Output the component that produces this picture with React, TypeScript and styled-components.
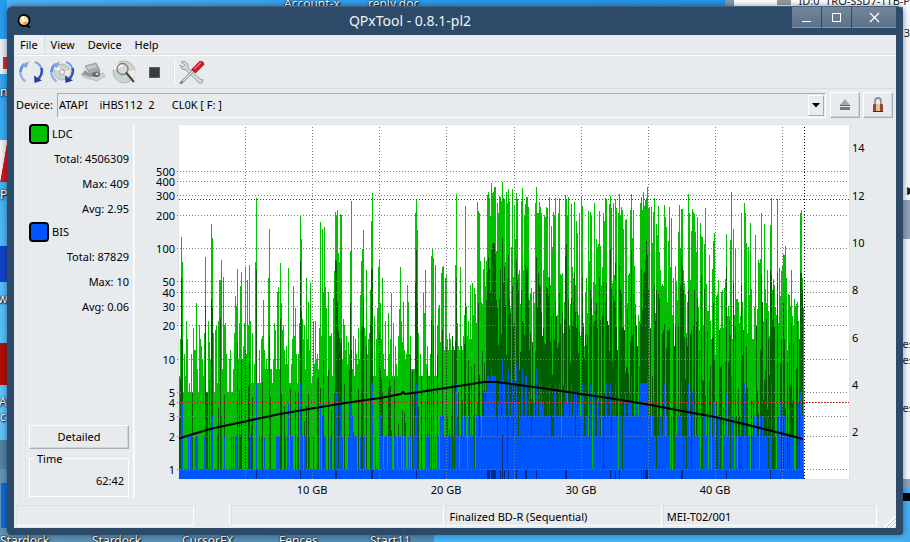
import React from "react";
import styled, { createGlobalStyle } from "styled-components";

const GlobalStyle = createGlobalStyle`
  * { box-sizing: border-box; }
  html, body { margin: 0; height: 100%; overflow: hidden; }
  body {
    font-family: "Noto Sans", "Open Sans", sans-serif;
    font-size: 11px;
    line-height: 16px;
    color: #000;
  }
  button, select { font: inherit; color: inherit; }
`;

/* ---------- desktop behind the window ---------- */

const Desktop = styled.div`
  position: relative;
  display: flex;
  height: 100vh;
  padding: 6px 7px 7px;
  overflow: hidden;
  background: linear-gradient(90deg, #4fb4f4 0%, #2a9aea 50%, #2491e6 100%);
`;

const Backdrop = styled.div`
  position: absolute;
  inset: 0;
  overflow: hidden;
`;

type PatchProps = {
  $left?: number;
  $right?: number;
  $top?: number;
  $bottom?: number;
  $w: number;
  $h: number;
  $bg: string;
};
const px = (n?: number) => (n === undefined ? "auto" : `${n}px`);

const Patch = styled.div<PatchProps>`
  position: absolute;
  left: ${(p) => px(p.$left)};
  right: ${(p) => px(p.$right)};
  top: ${(p) => px(p.$top)};
  bottom: ${(p) => px(p.$bottom)};
  width: ${(p) => p.$w}px;
  height: ${(p) => p.$h}px;
  background: ${(p) => p.$bg};
`;

const IconCaption = styled.span<{ $left?: number; $right?: number; $top?: number; $bottom?: number; $dark?: boolean }>`
  position: absolute;
  left: ${(p) => px(p.$left)};
  right: ${(p) => px(p.$right)};
  top: ${(p) => px(p.$top)};
  bottom: ${(p) => px(p.$bottom)};
  font-size: ${(p) => (p.$dark ? 11 : 12)}px;
  white-space: nowrap;
  color: ${(p) => (p.$dark ? "#1c1c28" : "#fff")};
  text-shadow: ${(p) => (p.$dark ? "none" : "1px 1px 2px #000, 0 0 2px #000")};
`;

/* ---------- window frame ---------- */

const Frame = styled.main`
  position: relative;
  flex: 1;
  min-width: 0;
  display: flex;
  flex-direction: column;
  padding: 0 7px 7px;
  background: #2d4a68;
  border-top: 1px solid #47617c;
  border-radius: 6px 6px 4px 4px;
  box-shadow: 0 0 6px rgba(0, 20, 50, 0.5);
`;

const TitleBar = styled.header`
  display: grid;
  grid-template-columns: 104px 1fr 104px;
  flex: none;
  height: 28px;
  color: #eef2f6;
`;

const AppIcon = styled.svg`
  width: 14px;
  height: 16px;
  margin: 6px 0 0 3px;
`;

const Title = styled.h1`
  margin: 0;
  font-size: 14px;
  font-weight: 400;
  line-height: 28px;
  text-align: center;
  padding-right: 90px;
`;

const WindowButtons = styled.div`
  display: grid;
  grid-template-columns: 29px 29px 44px;
  gap: 1px;
  height: 21px;
`;

const WindowButton = styled.button`
  display: grid;
  place-items: center;
  padding: 0;
  border: 0;
  border-bottom: 1px solid #8495a8;
  background: linear-gradient(#73869b, #5c728a);
  &:hover { background: #8496aa; }
`;

const Client = styled.div`
  flex: 1;
  min-height: 0;
  display: flex;
  flex-direction: column;
  background: #e7ebee;
`;

/* ---------- menu and toolbar ---------- */

const MenuBar = styled.nav`
  display: flex;
  flex: none;
  height: 20px;
  border-bottom: 1px solid #dde1e4;
`;

const MenuButton = styled.button<{ $active?: boolean }>`
  height: 19px;
  padding: 0 6px;
  border: 0;
  border-right: 1px solid ${(p) => (p.$active ? "#d8dce0" : "transparent")};
  background: ${(p) => (p.$active ? "#eceff1" : "none")};
  line-height: 19px;
`;

const ToolBar = styled.div`
  display: flex;
  flex: none;
  align-items: center;
  height: 34px;
  padding-left: 1px;
  border-top: 1px solid #fff;
  border-bottom: 1px solid #d9dde0;
`;

const ToolButton = styled.button`
  display: grid;
  place-items: center;
  width: 31px;
  height: 30px;
  padding: 0;
  border: 0;
  background: none;
`;

const ToolSeparator = styled.span`
  width: 2px;
  height: 26px;
  margin: 0 1px 0 3px;
  border-left: 1px solid #dde1e4;
  border-right: 1px solid #fff;
`;

const DeviceRow = styled.div`
  display: flex;
  flex: none;
  align-items: center;
  height: 32px;
  padding: 0 3px 0 2px;
`;

const DeviceLabel = styled.label`
  width: 41px;
  white-space: nowrap;
`;

const SelectBox = styled.div`
  flex: 1;
  display: grid;
  grid-template-columns: 1fr 19px;
  height: 25px;
`;

const DeviceSelect = styled.select`
  grid-area: 1 / 1 / 2 / 3;
  min-width: 0;
  height: 25px;
  padding: 0 20px 0 1px;
  appearance: none;
  border: 1px solid;
  border-color: #a5adb1 #fff #fff #a5adb1;
  border-radius: 0;
  background: #e7ebee;
`;

const SelectArrow = styled.span`
  grid-area: 1 / 2 / 2 / 3;
  z-index: 1;
  display: grid;
  place-items: center;
  width: 16px;
  height: 21px;
  margin: 2px 0 0 1px;
  border: 1px solid;
  border-color: #fff #a5adb1 #a5adb1 #fff;
  pointer-events: none;
`;

const RaisedButton = styled.button`
  border: 1px solid;
  border-color: #fff #a5b0b5 #a5b0b5 #fff;
  box-shadow: inset -1px -1px 0 #cdd3d6;
  background: #e7ebee;
  padding: 0;
`;

const SquareButton = styled(RaisedButton)`
  display: grid;
  place-items: center;
  flex: none;
  width: 30px;
  height: 26px;
  margin-left: 3px;
  &:first-of-type { margin-left: 4px; }
`;

/* ---------- body ---------- */

const Body = styled.div`
  flex: 1;
  min-height: 0;
  display: flex;
  padding: 0 6px 3px;
`;

const Gutter = styled.div`
  width: 6px;
  margin: 3px 3px 0 0;
  border: 1px solid #dfe3e6;
`;

const Sidebar = styled.aside`
  display: flex;
  flex-direction: column;
  width: 100px;
  padding: 3px 0 5px;
`;

const SidebarDivider = styled.div`
  width: 2px;
  margin: 4px 5px 4px 4px;
  border-left: 1px solid #fff;
  border-right: 1px solid #f3f5f6;
`;

const Series = styled.section`
  display: grid;
  grid-template-rows: 20px;
  grid-auto-rows: 17px;
  row-gap: 8px;
  margin-bottom: 3px;
`;

const SeriesHead = styled.h2`
  display: flex;
  align-items: center;
  gap: 3px;
  margin: 0;
  font-size: 11px;
  font-weight: 400;
  line-height: 20px;
`;

const Swatch = styled.button<{ $color: string }>`
  width: 20px;
  height: 20px;
  padding: 0;
  border: 2px solid #000;
  border-radius: 4px;
  background: ${(p) => p.$color};
`;

const Stat = styled.p`
  margin: 0;
  text-align: right;
  line-height: 14px;
`;

const DetailedButton = styled(RaisedButton)`
  height: 24px;
  margin-top: auto;
`;

const TimeBox = styled.fieldset`
  display: flex;
  justify-content: flex-end;
  height: 45px;
  margin: 3px 0 0;
  padding: 8px 4px 0;
  border: 1px solid #fff;
  outline: 1px solid transparent;
  legend { padding: 0 3px; line-height: 13px; }
`;

const ChartSvg = styled.svg`
  flex: 1;
  min-width: 0;
  min-height: 0;
  display: block;
  font-size: 11px;
`;

/* ---------- status bar ---------- */

const StatusBar = styled.footer`
  display: grid;
  grid-template-columns: 179fr 36fr 214fr 217fr 215fr 18px;
  flex: none;
  height: 23px;
  padding-left: 2px;
`;

const StatusCell = styled.div<{ $plain?: boolean }>`
  height: 21px;
  margin-right: 1px;
  padding-left: 3px;
  border: 1px solid;
  border-color: ${(p) => (p.$plain ? "transparent #fff transparent transparent" : "#dde1e4 #fff #fff #dde1e4")};
  line-height: 21px;
  white-space: nowrap;
`;

const Grip = styled.svg`
  align-self: end;
  justify-self: end;
`;

/* ---------- chart data ---------- */

const FIRST = 179;
const LAST = 803;
const FLOOR = 479;
const yOf = (n: number) => Math.round(469 - 110.5 * Math.log10(n));

const parse = (text: string) => {
  const map = new Map<number, number>();
  text.trim().split(/\s+/).forEach((pair) => {
    const [x, y] = pair.split(":").map(Number);
    map.set(x, y);
  });
  return map;
};

const ldcMax = parse(`
181:237 182:262 196:303 205:257 211:224 212:238 219:280 220:280 221:260 223:277 235:296 236:306 237:269 240:286 241:272
245:267 247:280 249:265 255:262 256:198 263:300 268:278 269:229 277:292 278:287 280:263 281:303 288:268 293:286 295:308
300:215 301:239 306:278 308:302 310:283 320:222 322:229 323:292 324:227 325:287 326:308 328:292 333:298 334:271 335:212
336:215 337:210 338:253 339:262 340:214 341:215 350:251 351:201 360:295 361:261 362:249 363:230 366:270 370:290 371:221
372:193 377:308 378:267 379:259 380:303 382:278 391:293 400:267 403:302 407:285 408:302 415:213 416:199 417:230 423:293
425:270 431:256 432:249 433:258 435:265 438:308 439:305 441:273 442:267 443:266 445:278 446:274 455:265 456:194 460:267
465:206 466:306 470:285 472:283 474:288 475:294 477:202 478:211 479:213 480:261 481:302 483:269 484:257 485:286 486:261
487:195 488:192 489:198 490:216 491:183 492:193 493:192 494:187 495:187 496:251 497:203 498:213 499:196 500:197 501:201
502:182 503:198 504:199 505:262 506:192 507:203 508:189 509:201 510:308 511:247 512:189 513:277 514:205 515:239 516:193
517:199 518:274 519:270 521:201 522:188 523:270 524:215 525:204 526:197 527:197 528:207 529:300 530:293 531:288 533:292
535:203 536:187 537:213 538:213 539:202 540:207 541:213 543:270 544:215 545:217 546:207 547:208 548:277 549:197 550:285
551:226 552:247 553:212 554:215 555:198 558:213 559:198 560:274 561:275 562:273 564:302 565:195 566:199 567:215 568:197
571:204 572:267 573:278 574:202 575:285 576:221 577:233 579:213 581:196 582:206 585:292 586:278 588:211 589:261 590:212
591:215 593:282 594:203 595:284 596:239 597:247 598:244 599:211 600:246 601:285 602:267 603:213 604:221 605:198 606:199
609:204 610:196 611:208 612:283 613:203 614:275 615:199 616:208 618:213 619:194 620:215 621:207 622:210 623:229 625:220
626:219 627:303 628:275 629:273 630:210 631:194 632:238 633:210 634:266 640:203 641:197 642:210 643:192 644:206 645:200
646:198 647:187 648:208 649:207 651:207 652:243 653:212 654:198 656:224 657:235 658:206 659:252 660:270 661:286 662:284
663:286 664:205 665:217 666:227 667:302 668:241 669:207 670:267 671:218 673:278 675:266 676:281 677:300 678:232 679:205
680:248 681:209 682:209 683:270 684:283 685:294 687:302 688:194 689:213 690:280 691:231 692:209 693:212 694:214 695:232
696:252 697:217 700:223 701:236 702:237 704:244 705:208 706:284 709:255 712:269 713:241 714:233 716:296 717:294 718:280
721:292 722:290 724:288 725:279 726:234 730:240 731:192 733:229 735:249 736:299 737:299 738:302 741:213 742:302 744:203
745:213 746:243 748:247 749:295 750:223 751:289 755:235 758:260 759:263 760:259 761:213 764:224 765:289 767:270 770:225
771:198 772:290 773:279 774:285 777:199 779:268 780:296 781:271 782:265 783:254 784:255 785:246 786:278 788:294 789:295
791:270 794:299 797:302 800:213 801:210 802:278 803:308`);

const ldcAvg = parse(`
181:278 182:340 205:306 211:299 212:308 220:318 237:343 241:360 245:350 249:352 256:270 269:336 280:319 300:261 301:311
323:360 335:260 336:261 337:302 338:331 339:338 340:343 341:339 350:303 351:350 361:330 362:326 363:298 366:346 370:325
371:270 372:268 379:332 415:283 416:250 417:303 431:320 433:325 442:330 456:278 465:303 478:303 486:300 487:272 488:257
489:269 490:292 491:250 492:244 493:243 494:243 495:254 496:300 497:308 499:299 500:269 502:237 503:283 504:267 505:305
507:279 508:255 509:299 512:286 516:260 517:280 518:291 521:290 525:265 526:269 527:267 528:299 536:257 537:308 538:273
539:285 540:287 546:287 547:288 548:296 549:278 555:302 559:293 565:256 566:244 568:299 571:298 573:302 574:273 582:278
590:290 591:299 596:303 599:278 603:282 605:303 606:283 610:249 611:289 613:296 614:301 615:263 619:265 620:290 621:294
631:250 633:294 641:269 643:273 644:272 645:260 646:241 647:255 648:290 654:285 656:290 658:294 659:299 680:285 681:256
682:267 683:290 688:290 694:290 697:299 701:275 704:289 713:303 726:267 733:283 741:285 761:275 762:302 770:270 771:275
773:290 777:273 783:303 800:273 801:273 802:290`);

const bisMax = parse(`
181:402 182:402 205:416 211:416 212:416 221:416 256:383 269:416 288:402 300:383 320:402 322:416 335:392 336:392 337:392
340:402 341:402 350:402 351:392 363:402 371:383 372:383 379:416 415:416 416:383 433:416 442:416 455:392 456:383 477:402
486:392 487:376 488:376 489:383 490:379 491:369 492:376 493:376 494:376 495:376 499:383 500:379 502:359 503:379 504:383
508:369 512:379 516:364 521:383 522:369 525:376 526:376 536:369 539:383 541:383 549:383 555:383 559:383 565:383 566:392
571:383 574:392 582:383 590:383 594:392 605:383 606:383 610:383 615:383 619:383 631:376 640:383 641:383 642:383 643:383
644:383 645:383 646:383 647:376 664:383 681:383 688:383 692:392 726:392 731:376 744:383 745:392 771:383 782:416 784:416
785:416 800:392 801:392 802:416`);

const bisAvg = [256, 300, 335, 336, 371, 372, 416, 487, 488, 489, 491, 492, 493, 494, 495, 500, 504, 508, 516, 525, 526,
  536, 565, 566, 610, 615, 619, 641, 643, 645, 646, 647, 681, 682, 726, 770];

const randomFrom = (seed: number) => () => {
  seed = (seed * 1664525 + 1013904223) % 4294967296;
  return seed / 4294967296;
};

function buildBars() {
  const rnd = randomFrom(8112);
  let light = "";
  let dark = "";
  let blue = "";
  for (let x = FIRST; x <= LAST; x++) {
    const r = rnd();
    let n: number;
    if (x < 372) n = Math.floor(5 + (x > 240 ? 1 : 0) + r ** 2 * 18);
    else if (x < 440) n = Math.floor(7 + r ** 3 * 22);
    else if (x < 480) n = Math.floor(12 + r ** 2 * 16);
    else if (x < 700) n = Math.floor(12 + r * 22);
    else n = Math.floor(9 + r * 24);
    const top = ldcMax.get(x) ?? yOf(n);
    light += `M${x} ${top}h1V${FLOOR}h-1z`;

    const d = rnd();
    const h = rnd();
    let m = 0;
    if (x < 320) m = d < 0.14 ? 2 + h * 5 : 0;
    else if (x < 390) m = d < 0.3 ? 2 + h * 6 : 0;
    else if (x < 450) m = d < 0.4 ? 2 + h ** 2 * 12 : 0;
    else if (x < 483) m = d < 0.55 ? 3 + h ** 2 * 16 : 0;
    else if (x < 650) m = d < 0.8 ? 4 + h * 24 : 0;
    else if (x < 700) m = d < 0.65 ? 4 + h * 18 : 0;
    else m = d < 0.6 ? 3 + h ** 2 * 20 : 0;
    const darkTop = ldcAvg.get(x) ?? (m ? Math.max(yOf(m), top) : FLOOR);
    if (darkTop < FLOOR) dark += `M${x} ${darkTop}h1V${FLOOR}h-1z`;

    const b = rnd();
    let level = 1;
    if (x < 245) level = b < 0.12 ? 2 : 1;
    else if (x < 340) level = b < 0.32 ? 2 : 1;
    else if (x < 440) level = b < 0.04 ? 3 : b < 0.5 ? 2 : 1;
    else if (x < 483) level = b < 0.3 ? 3 : b < 0.85 ? 2 : 1;
    else if (x < 650) level = b < 0.08 ? 5 : b < 0.4 ? 4 : b < 0.82 ? 3 : b < 0.97 ? 2 : 1;
    else if (x < 700) level = b < 0.16 ? 4 : b < 0.45 ? 3 : b < 0.83 ? 2 : 1;
    else level = b < 0.06 ? 4 : b < 0.24 ? 3 : b < 0.66 ? 2 : 1;
    const blueTop = bisMax.get(x) ?? yOf(level);
    blue += `M${x} ${blueTop}h1V${FLOOR}h-1z`;
  }
  const navy = bisAvg.map((x) => `M${x} 470h1V${FLOOR}h-1z`).join("") + `M502 435h1V${FLOOR}h-1z`;
  return { light, dark, blue, navy };
}

const bars = buildBars();

const leftTicks = [500, 400, 300, 200, 100, 50, 40, 30, 20, 10, 5, 4, 3, 2, 1];
const rightTicks: [number, number][] = [[14, 148], [12, 196], [10, 243], [8, 290], [6, 338], [4, 385], [2, 432]];
const minorX = [245, 312, 379, 446, 514, 581, 648, 715, 782];
const majorX: [string, number][] = [["10 GB", 312], ["20 GB", 446], ["30 GB", 581], ["40 GB", 715]];

function Chart() {
  return (
    <ChartSvg viewBox="140 121 750 381" role="img" aria-label="LDC and BIS error rates over disc capacity">
      <rect x="178" y="124" width="672" height="356" fill="#dfe3e6" />
      <rect x="179" y="125" width="670" height="354" fill="#fff" />
      <g shapeRendering="crispEdges">
        <path d={bars.light} fill="#00c000" />
        <path d={bars.dark} fill="#006000" />
        <path d={bars.blue} fill="#0055ff" />
        <path d={bars.navy} fill="#002a80" />
        <g stroke="#808080" strokeDasharray="1 2">
          {leftTicks.map((t) => (
            <line key={t} x1="177" x2="849" y1={yOf(t) + 0.5} y2={yOf(t) + 0.5} />
          ))}
          {minorX.map((x) => (
            <line key={x} x1={x + 0.5} x2={x + 0.5} y1="127" y2="479" />
          ))}
        </g>
        <path d="M179 199.500H849M179 402.500H849" stroke="#e00000" strokeDasharray="1 2" />
        <line x1="804.5" x2="804.5" y1="127" y2="479" stroke="#000" strokeDasharray="1 2" />
      </g>
      <path
        d="M179 438.500L190 435L212 428.500L245 421.500L280 414L312 408.500L345 403L380 398L401 394L403 392L405 394L413 393L446 388L484 382H496L515 384.500L548 389L581 394L615 399L648 404.500L682 411L715 417L748 425L782 433.500L803 439"
        fill="none"
        stroke="#000"
        strokeWidth="2"
      />
      <g textAnchor="end">
        {leftTicks.map((t) => (
          <text key={t} x="175" y={yOf(t) + 5}>{t}</text>
        ))}
      </g>
      {rightTicks.map(([t, y]) => (
        <text key={t} x="852" y={y + 4}>{t}</text>
      ))}
      <g textAnchor="middle">
        {majorX.map(([t, x]) => (
          <text key={t} x={x} y="494">{t}</text>
        ))}
      </g>
    </ChartSvg>
  );
}

/* ---------- icons ---------- */

const Arrows = () => (
  <g fill="none">
    <path d="M7.500 21.500A11 11 0 0 1 4 6.500" stroke="#8fb4ea" strokeWidth="2.400" />
    <path d="M2.500 12A11 11 0 0 1 6.500 4" stroke="#5f92dc" strokeWidth="2.600" />
    <path d="M3 5.500L11 1L8.500 8Z" fill="#7fa9e6" />
    <path d="M17 2A11 11 0 0 1 24 11" stroke="#7ba4e2" strokeWidth="2" />
    <path d="M23.500 8A11 11 0 0 1 20.500 18.500" stroke="#3159b4" strokeWidth="2.600" />
    <path d="M16 15.500L16.500 23L24 20.500Z" fill="#22409a" />
  </g>
);

const Disc = ({ r = 8 }: { r?: number }) => (
  <>
    <circle cx="12" cy="12" r={r} fill="#cfd2d3" stroke="#a3a7a9" strokeWidth=".7" />
    <path d={`M12 12L${12 - r} 9A${r} ${r} 0 0 1 ${12 - r / 2} ${12 - r * 0.86}Z`} fill="#f6f6ee" />
    <path d={`M12 12L${12 + r} 10A${r} ${r} 0 0 1 ${12 + r * 0.8} ${12 + r * 0.6}Z`} fill="#f1ead9" />
    <path d={`M12 12L${12 - r * 0.7} ${12 + r * 0.7}A${r} ${r} 0 0 0 ${12 - r * 0.2} ${12 + r * 0.95}Z`} fill="#b9dcc2" />
    <circle cx="12" cy="12" r="2.500" fill="#eef0f1" stroke="#8f9395" strokeWidth=".8" />
  </>
);

const RefreshIcon = () => (
  <svg width="26" height="24" viewBox="0 0 26 24" aria-hidden="true"><Arrows /></svg>
);

const MediaIcon = () => (
  <svg width="26" height="24" viewBox="0 0 26 24" aria-hidden="true">
    <g transform="translate(1 0)"><Disc r={8} /></g>
    <Arrows />
  </svg>
);

const DriveIcon = () => (
  <svg width="26" height="24" viewBox="0 0 26 24" aria-hidden="true">
    <path d="M5 6L16 3L20 10L10 14Z" fill="#a3acb6" stroke="#858e98" strokeWidth=".7" />
    <path d="M6 6.500L15 4.500L17 7L8 9.500Z" fill="#c3c9d0" />
    <path d="M10 14L20 10V15L11 19L2 14L5 10Z" fill="#8f979f" />
    <path d="M1 14L10 17L23 13L25 16L17 21L3 17Z" fill="#d0d3d6" stroke="#a0a5a8" strokeWidth=".6" />
    <ellipse cx="16" cy="14.500" rx="4" ry="2.500" fill="#6c6464" />
    <ellipse cx="17" cy="14" rx="1.500" ry="1" fill="#e1e3e4" />
  </svg>
);

const ScanIcon = () => (
  <svg width="26" height="24" viewBox="0 0 26 24" aria-hidden="true">
    <g transform="translate(1 0)"><Disc r={11} /></g>
    <circle cx="11.500" cy="9" r="5.500" fill="#d3d9db" stroke="#767b7e" strokeWidth="1.300" />
    <path d="M8 8Q9 5.500 12 5.500" stroke="#fff" strokeWidth="1.500" fill="none" />
    <path d="M15.500 13L22.500 21.500" stroke="#434546" strokeWidth="2" strokeLinecap="round" />
  </svg>
);

const StopIcon = () => (
  <svg width="26" height="24" viewBox="0 0 26 24" aria-hidden="true">
    <rect x="7.500" y="7.500" width="10" height="10" fill="#393d3b" stroke="#5d615f" strokeWidth="1" />
  </svg>
);

const ToolsIcon = () => (
  <svg width="26" height="24" viewBox="0 0 26 24" aria-hidden="true">
    <path d="M2 2L5 1L9 4V8L21 19L24 20L23 23H20L18 21L7 10L3 9L1 5L4 7L6 5Z" fill="#d7dadb" stroke="#8a8f92" strokeWidth=".8" />
    <path d="M14 11L4 21L2 23" stroke="#85898c" strokeWidth="2.800" strokeLinecap="round" />
    <path d="M14 11L4 21" stroke="#e0e2e3" strokeWidth="1.300" />
    <path d="M12.500 9.500L20.500 1.500Q24.500 .5 25 4.500L16.500 13Z" fill="#d71920" stroke="#9f1015" strokeWidth=".7" />
    <path d="M15 9L22 2.500" stroke="#f47b7d" strokeWidth="1.200" />
  </svg>
);

const tools: [string, () => React.ReactElement][] = [
  ["Rescan bus", RefreshIcon],
  ["Update media info", MediaIcon],
  ["Device info", DriveIcon],
  ["Start scan", ScanIcon],
  ["Stop", StopIcon],
];

/* ---------- page ---------- */

const device = "ATAPI\u00a0\u00a0\u00a0\u00a0iHBS112\u00a0\u00a02\u00a0\u00a0\u00a0\u00a0\u00a0\u00a0CL0K [ F: ]";

function DesktopItems() {
  return (
    <Backdrop aria-hidden="true">
      <Patch $left={0} $top={0} $w={7} $h={542} $bg="linear-gradient(#279bea, #55bdf8 50%, #62c4fa 80%)" />
      <Patch $left={0} $top={39} $w={7} $h={35} $bg="#e9edf4" />
      <Patch $left={3} $top={57} $w={4} $h={12} $bg="#d82632" />
      <Patch $left={0} $top={140} $w={7} $h={42} $bg="linear-gradient(100deg, #f2f2f2 50%, #d6141c 55%)" />
      <Patch $left={0} $top={246} $w={7} $h={36} $bg="#1244c4" />
      <Patch $left={0} $top={343} $w={7} $h={42} $bg="#b11005" />
      <Patch $left={0} $top={440} $w={7} $h={29} $bg="#54829f" />
      <Patch $left={0} $top={469} $w={7} $h={73} $bg="#6095b8" />
      <Patch $left={1} $top={483} $w={6} $h={45} $bg="#1269d4" />
      <IconCaption $left={0} $top={84}>nl</IconCaption>
      <IconCaption $left={0} $top={187}>P</IconCaption>
      <IconCaption $left={-2} $top={291}>w</IconCaption>
      <IconCaption $left={-1} $top={394}>Ac</IconCaption>
      <IconCaption $left={0} $top={409}>c</IconCaption>
      <Patch $left={0} $bottom={0} $w={434} $h={7} $bg="linear-gradient(90deg, #5f93b5, #4f8cb4)" />
      <Patch $left={434} $bottom={0} $w={476} $h={7} $bg="#48b5f5" />
      <IconCaption $left={284} $top={-4}>Account-x</IconCaption>
      <IconCaption $left={368} $top={-4}>reply.doc</IconCaption>
      <IconCaption $left={0} $bottom={-7}>Stardock</IconCaption>
      <IconCaption $left={92} $bottom={-7}>Stardock</IconCaption>
      <IconCaption $left={182} $bottom={-7}>CursorFX</IconCaption>
      <IconCaption $left={279} $bottom={-7}>Fences</IconCaption>
      <IconCaption $left={370} $bottom={-7}>Start11</IconCaption>
      <Patch $right={176} $top={0} $w={9} $h={7} $bg="#8597aa" />
      <Patch $right={0} $top={0} $w={176} $h={7} $bg="#fff" />
      <Patch $right={119} $top={0} $w={14} $h={5} $bg="#9a9c9b" />
      <Patch $right={0} $top={6} $w={7} $h={194} $bg="#f8fafb" />
      <IconCaption $right={0} $top={-7} $dark>ID:0&nbsp; TRO-SSD7-1TB-P</IconCaption>
      <Patch $right={0} $top={200} $w={7} $h={39} $bg="#92a1b3" />
      <Patch $right={0} $top={239} $w={7} $h={240} $bg="#f8fafb" />
      <Patch $right={0} $top={479} $w={7} $h={9} $bg="#92a1b3" />
      <Patch $right={0} $top={488} $w={7} $h={54} $bg="#43aff2" />
      <Patch $right={0} $top={493} $w={7} $h={8} $bg="#05070b" />
      <IconCaption $right={0} $top={25} $dark>3</IconCaption>
      <IconCaption $right={-4} $top={336} $dark>es</IconCaption>
      <IconCaption $right={-4} $top={352} $dark>es</IconCaption>
      <IconCaption $right={-4} $top={400} $dark>es</IconCaption>
      <IconCaption $right={-5} $top={182} $dark>▶</IconCaption>
    </Backdrop>
  );
}

function SeriesStats(props: { name: string; color: string; total: string; max: string; avg: string }) {
  return (
    <Series>
      <SeriesHead>
        <Swatch $color={props.color} aria-label={`${props.name} colour`} />
        {props.name}
      </SeriesHead>
      <Stat>Total: {props.total}</Stat>
      <Stat>Max: {props.max}</Stat>
      <Stat>Avg: {props.avg}</Stat>
    </Series>
  );
}

export default function App() {
  return (
    <>
      <GlobalStyle />
      <Desktop>
        <DesktopItems />
        <Frame>
          <TitleBar>
            <AppIcon viewBox="0 0 14 16" aria-hidden="true">
              <path d="M9 12L13 14.500" stroke="#000" strokeWidth="2" />
              <circle cx="7" cy="7.500" r="5.500" fill="#f5dda0" stroke="#000" strokeWidth="1.800" />
              <path d="M7 7.500L3 5A5 5 0 0 1 7 3Z" fill="#fff" />
              <path d="M7 7.500L10.500 10A4.500 4.500 0 0 1 6 12Z" fill="#f19a37" />
              <circle cx="7" cy="7.500" r="1.500" fill="#fff" />
            </AppIcon>
            <Title>QPxTool - 0.8.1-pl2</Title>
            <WindowButtons>
              <WindowButton aria-label="Minimize">
                <svg width="11" height="11"><path d="M1 9.500H10" stroke="#fff" /></svg>
              </WindowButton>
              <WindowButton aria-label="Maximize">
                <svg width="11" height="11"><rect x="1.500" y="1.500" width="8" height="8" fill="none" stroke="#fff" /></svg>
              </WindowButton>
              <WindowButton aria-label="Close">
                <svg width="11" height="11"><path d="M1 1L10 10M10 1L1 10" stroke="#fff" strokeWidth="1.300" /></svg>
              </WindowButton>
            </WindowButtons>
          </TitleBar>

          <Client>
            <MenuBar>
              <MenuButton $active>File</MenuButton>
              <MenuButton>View</MenuButton>
              <MenuButton>Device</MenuButton>
              <MenuButton>Help</MenuButton>
            </MenuBar>

            <ToolBar>
              {tools.map(([label, Icon]) => (
                <ToolButton key={label} aria-label={label}><Icon /></ToolButton>
              ))}
              <ToolSeparator />
              <ToolButton aria-label="Preferences"><ToolsIcon /></ToolButton>
            </ToolBar>

            <DeviceRow>
              <DeviceLabel htmlFor="device">Device:</DeviceLabel>
              <SelectBox>
                <DeviceSelect id="device">
                  <option>{device}</option>
                </DeviceSelect>
                <SelectArrow>
                  <svg width="8" height="5" aria-hidden="true"><path d="M0 0H8L4 4.500Z" /></svg>
                </SelectArrow>
              </SelectBox>
              <SquareButton aria-label="Eject">
                <svg width="12" height="14" viewBox="0 0 12 14" aria-hidden="true">
                  <path d="M6 1L11 7H1Z" fill="#a2a6a8" />
                  <path d="M1 7.500H11" stroke="#5d6163" />
                  <rect x="1" y="9" width="10" height="3" fill="#74787a" />
                </svg>
              </SquareButton>
              <SquareButton aria-label="Lock">
                <svg width="12" height="18" viewBox="0 0 12 18" aria-hidden="true">
                  <path d="M3 9V5Q3 2 6 2Q9 2 9 5V9" fill="none" stroke="#96908b" strokeWidth="1.800" />
                  <rect x="1" y="8" width="10" height="8" rx="1" fill="#8b4b30" />
                  <rect x="4" y="8" width="4" height="8" fill="#e6bf9b" />
                  <path d="M1 15.500H11" stroke="#4c2718" />
                </svg>
              </SquareButton>
            </DeviceRow>

            <Body>
              <Gutter />
              <Sidebar>
                <SeriesStats name="LDC" color="#00c000" total="4506309" max="409" avg="2.95" />
                <SeriesStats name="BIS" color="#0055ff" total="87829" max="10" avg="0.06" />
                <DetailedButton>Detailed</DetailedButton>
                <TimeBox>
                  <legend>Time</legend>
                  62:42
                </TimeBox>
              </Sidebar>
              <SidebarDivider />
              <Chart />
            </Body>

            <StatusBar>
              <StatusCell />
              <StatusCell $plain />
              <StatusCell />
              <StatusCell>Finalized BD-R (Sequential)</StatusCell>
              <StatusCell>MEI-T02/001</StatusCell>
              <Grip width="12" height="12" aria-hidden="true">
                <path d="M0 12L12 0M4 12L12 4M8 12L12 8" stroke="#fff" strokeWidth="1.500" />
                <path d="M2 12L12 2M6 12L12 6M10 12L12 10" stroke="#bcc3c8" strokeWidth="1" />
              </Grip>
            </StatusBar>
          </Client>
        </Frame>
      </Desktop>
    </>
  );
}
